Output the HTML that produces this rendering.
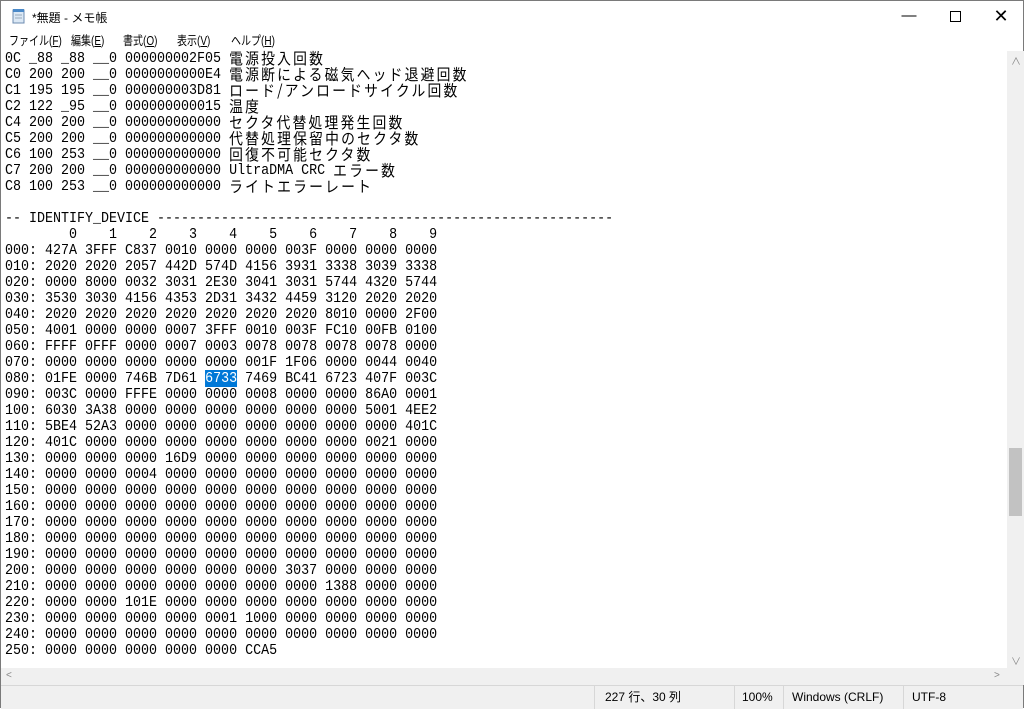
<!DOCTYPE html>
<html><head><meta charset="utf-8"><style>
body{margin:0;width:1024px;height:708px;overflow:hidden;background:#fff;font-family:"Liberation Sans","Noto Sans CJK JP",sans-serif;position:relative}
.win{position:absolute;left:0;top:0;width:1022px;height:706px;border:1px solid #7a7a7a}
.title{position:absolute;left:0;top:0;width:1022px;height:30px;background:#fff;font-size:12px}
.title .t{position:absolute;left:31px;top:8px;color:#000}
.ctrl{position:absolute;top:0;width:46px;height:30px;text-align:center;line-height:30px;font-size:15px}
.menu{position:absolute;left:0;top:30px;height:20px;width:1022px;font-size:12.5px;line-height:20px}
.menu span{position:absolute;top:0;transform:scaleX(0.8);transform-origin:left;white-space:nowrap}
.ed{position:absolute;left:0;top:50px;width:1006px;height:617px}
.ln{position:absolute;left:4px;height:16px;line-height:16px;font-family:"Liberation Mono",monospace;font-size:15px;white-space:pre;color:#000;transform:scaleX(0.889);transform-origin:left}
.j{font-family:"Noto Sans CJK JP",sans-serif;font-size:15.5px;letter-spacing:2.5px;line-height:16px;display:inline-block;height:16px;vertical-align:top;position:relative;top:-1px}
.sel{background:#0078d7;color:#fff}
.vs{position:absolute;left:1006px;top:50px;width:17px;height:617px;background:#f0f0f0}
.thumb{position:absolute;left:2px;top:397px;width:13px;height:68px;background:#c2c2c2}
.hs{position:absolute;left:0;top:667px;width:1006px;height:17px;background:#f0f0f0}
.corner{position:absolute;left:1006px;top:667px;width:17px;height:17px;background:#f0f0f0}
.status{position:absolute;left:0;top:684px;width:1022px;height:23px;background:#f0f0f0;border-top:1px solid #d7d7d7;font-size:12px;line-height:23px}
.status span{position:absolute;top:0}
.sep{position:absolute;top:0;width:1px;height:23px;background:#d7d7d7}
.arr{position:absolute;color:#888;font-size:10px}
</style></head><body>
<div class="win">
<div class="title">
<svg style="position:absolute;left:10px;top:7px" width="16" height="16"><rect x="2" y="2" width="11" height="13" fill="#dbe8f5" stroke="#6d8bb0"/><rect x="2" y="1" width="11" height="3" fill="#4a89c8"/><line x1="4" y1="7" x2="11" y2="7" stroke="#9ab"/><line x1="4" y1="10" x2="11" y2="10" stroke="#9ab"/></svg>
<span class="t">*無題 - メモ帳</span>
<div class="ctrl" style="left:885px">&#x2014;</div>
<div class="ctrl" style="left:931px"><span style="display:inline-block;width:9px;height:9px;border:1px solid #000;vertical-align:middle"></span></div>
<div class="ctrl" style="left:977px;font-size:18px">✕</div>
</div>
<div class="menu">
<span style="left:8px">ファイル(<u>F</u>)</span>
<span style="left:70px">編集(<u>E</u>)</span>
<span style="left:122px">書式(<u>O</u>)</span>
<span style="left:176px">表示(<u>V</u>)</span>
<span style="left:230px">ヘルプ(<u>H</u>)</span>
</div>
<div class="ed">
<div class="ln" style="top:0">0C _88 _88 __0 000000002F05 <span class="j">電源投入回数</span></div>
<div class="ln" style="top:16px">C0 200 200 __0 0000000000E4 <span class="j">電源断による磁気ヘッド退避回数</span></div>
<div class="ln" style="top:32px">C1 195 195 __0 000000003D81 <span class="j">ロード/アンロードサイクル回数</span></div>
<div class="ln" style="top:48px">C2 122 _95 __0 000000000015 <span class="j">温度</span></div>
<div class="ln" style="top:64px">C4 200 200 __0 000000000000 <span class="j">セクタ代替処理発生回数</span></div>
<div class="ln" style="top:80px">C5 200 200 __0 000000000000 <span class="j">代替処理保留中のセクタ数</span></div>
<div class="ln" style="top:96px">C6 100 253 __0 000000000000 <span class="j">回復不可能セクタ数</span></div>
<div class="ln" style="top:112px">C7 200 200 __0 000000000000 UltraDMA CRC <span class="j">エラー数</span></div>
<div class="ln" style="top:128px">C8 100 253 __0 000000000000 <span class="j">ライトエラーレート</span></div>
<div class="ln" style="top:160px">-- IDENTIFY_DEVICE ---------------------------------------------------------</div>
<div class="ln" style="top:176px">        0    1    2    3    4    5    6    7    8    9</div>
<div class="ln" style="top:192px">000: 427A 3FFF C837 0010 0000 0000 003F 0000 0000 0000</div>
<div class="ln" style="top:208px">010: 2020 2020 2057 442D 574D 4156 3931 3338 3039 3338</div>
<div class="ln" style="top:224px">020: 0000 8000 0032 3031 2E30 3041 3031 5744 4320 5744</div>
<div class="ln" style="top:240px">030: 3530 3030 4156 4353 2D31 3432 4459 3120 2020 2020</div>
<div class="ln" style="top:256px">040: 2020 2020 2020 2020 2020 2020 2020 8010 0000 2F00</div>
<div class="ln" style="top:272px">050: 4001 0000 0000 0007 3FFF 0010 003F FC10 00FB 0100</div>
<div class="ln" style="top:288px">060: FFFF 0FFF 0000 0007 0003 0078 0078 0078 0078 0000</div>
<div class="ln" style="top:304px">070: 0000 0000 0000 0000 0000 001F 1F06 0000 0044 0040</div>
<div class="ln" style="top:320px">080: 01FE 0000 746B 7D61 <span class="sel">6733</span> 7469 BC41 6723 407F 003C</div>
<div class="ln" style="top:336px">090: 003C 0000 FFFE 0000 0000 0008 0000 0000 86A0 0001</div>
<div class="ln" style="top:352px">100: 6030 3A38 0000 0000 0000 0000 0000 0000 5001 4EE2</div>
<div class="ln" style="top:368px">110: 5BE4 52A3 0000 0000 0000 0000 0000 0000 0000 401C</div>
<div class="ln" style="top:384px">120: 401C 0000 0000 0000 0000 0000 0000 0000 0021 0000</div>
<div class="ln" style="top:400px">130: 0000 0000 0000 16D9 0000 0000 0000 0000 0000 0000</div>
<div class="ln" style="top:416px">140: 0000 0000 0004 0000 0000 0000 0000 0000 0000 0000</div>
<div class="ln" style="top:432px">150: 0000 0000 0000 0000 0000 0000 0000 0000 0000 0000</div>
<div class="ln" style="top:448px">160: 0000 0000 0000 0000 0000 0000 0000 0000 0000 0000</div>
<div class="ln" style="top:464px">170: 0000 0000 0000 0000 0000 0000 0000 0000 0000 0000</div>
<div class="ln" style="top:480px">180: 0000 0000 0000 0000 0000 0000 0000 0000 0000 0000</div>
<div class="ln" style="top:496px">190: 0000 0000 0000 0000 0000 0000 0000 0000 0000 0000</div>
<div class="ln" style="top:512px">200: 0000 0000 0000 0000 0000 0000 3037 0000 0000 0000</div>
<div class="ln" style="top:528px">210: 0000 0000 0000 0000 0000 0000 0000 1388 0000 0000</div>
<div class="ln" style="top:544px">220: 0000 0000 101E 0000 0000 0000 0000 0000 0000 0000</div>
<div class="ln" style="top:560px">230: 0000 0000 0000 0000 0001 1000 0000 0000 0000 0000</div>
<div class="ln" style="top:576px">240: 0000 0000 0000 0000 0000 0000 0000 0000 0000 0000</div>
<div class="ln" style="top:592px">250: 0000 0000 0000 0000 0000 CCA5</div>
</div>
<div class="vs"><span class="arr" style="left:4px;top:2px">&#x2227;</span><div class="thumb"></div><span class="arr" style="left:4px;top:602px">&#x2228;</span></div>
<div class="hs"><span class="arr" style="left:5px;top:2px">&lt;</span><span class="arr" style="left:993px;top:2px">&gt;</span></div>
<div class="corner"></div>
<div class="status">
<div class="sep" style="left:593px"></div>
<span style="left:604px">227 行、30 列</span>
<div class="sep" style="left:733px"></div>
<span style="left:741px">100%</span>
<div class="sep" style="left:782px"></div>
<span style="left:791px">Windows (CRLF)</span>
<div class="sep" style="left:902px"></div>
<span style="left:911px">UTF-8</span>
</div>
</div>
</body></html>
